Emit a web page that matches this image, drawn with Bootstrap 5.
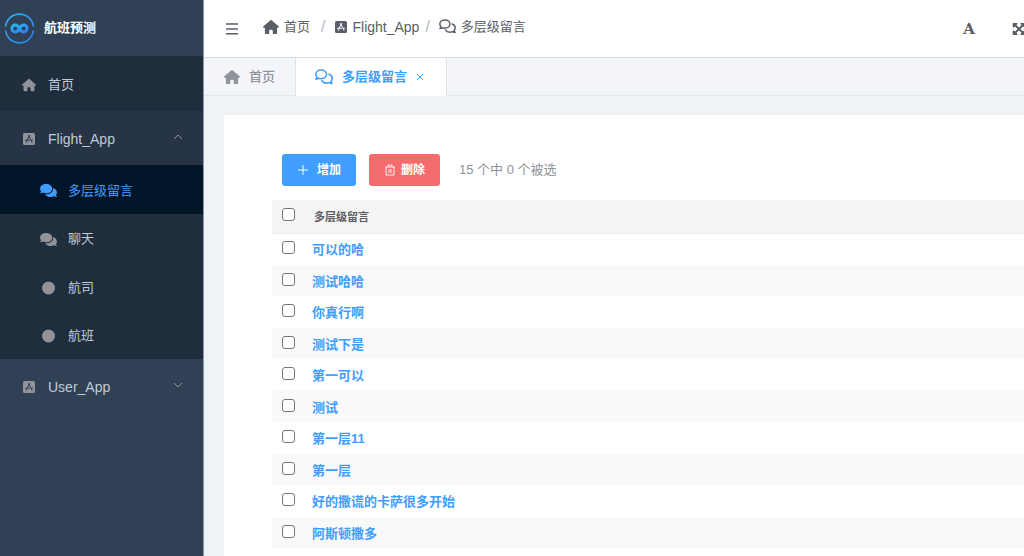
<!DOCTYPE html>
<html lang="zh-CN">
<head>
<meta charset="utf-8">
<meta name="viewport" content="width=device-width, initial-scale=1">
<title>航班预测</title>
<link rel="stylesheet" href="https://cdn.jsdelivr.net/npm/bootstrap@5.3.0/dist/css/bootstrap.min.css">
<style>
  body { font: 13px/20px "Liberation Sans", "Noto Sans CJK SC", sans-serif; background: #eff3f6; color: #5a5e66; }
  a { color: inherit; text-decoration: none; }
  svg { display: block; flex: none; }
  .latin { font-size: 14px; }

  .side { width: 204px; flex: none; background: #304156; border-right: 1px solid #8c97a5; color: #bfcbd9; --cut: #304156; }
  .brand { height: 56px; padding-left: 4px; gap: 9px; color: #fff; font-weight: 700; }
  .side-link { height: 54px; padding: 2px 20px 0 22px; gap: 12px; }
  .side-link svg, .sub-link svg { color: #909399; }
  .side-home { height: 55px; background: #1f2d3d; }
  .side-open { background: #263445; --cut: #263445; }
  .sub-menu { background: #1f2d3d; }
  .sub-link { height: 48px; padding: 2px 0 0 40px; gap: 11px; }
  .sub-link:nth-child(odd) { height: 49px; }
  .sub-link.current, .sub-link.current svg { background: #001528; color: #409eff; }

  .topbar { height: 58px; padding-left: 22px; border-bottom: 1px solid #d8dce5; background: #fff; overflow: hidden; --cut: #fff; }
  .plain { background: none; border: 0; padding: 0; color: #5a5e66; }
  .crumbs { margin: 0 0 4px 25px; }
  .crumbs li { display: flex; align-items: center; gap: 5px; }
  .crumbs .crumb-sep { color: #b4bac6; font-size: 16px; padding: 0 5px 0 6px; }
  .crumbs .crumb-sep.wide { padding: 0 10px 0 11px; }
  .tools { gap: 37px; margin-right: -2px; }
  .letter { font: 700 15px/20px "DejaVu Serif", serif; }

  .tabs { height: 38px; background: #f4f5fa; border-bottom: 1px solid #e4e7ed; }
  .tab-link { height: 38px; padding: 0 20px; gap: 9px; border-right: 1px solid #dfe3ea; color: #909399; font-weight: 500; }
  .tab-link.current { background: #fff; color: #409eff; padding: 0 22px 0 19px; font-weight: 700; }

  .panel { margin: 19px 0 0 20px; padding: 39px 0 8px 48px; background: #fff; }
  .actions { padding-left: 10px; gap: 13px; margin-bottom: 14px; }
  .act { height: 32px; border: 0; border-radius: 3px; color: #fff; font-size: 12px; font-weight: 700; padding: 0 15px; }
  .act-add { background: #409eff; gap: 8px; }
  .act-del { background: #f56c6c; gap: 5px; }
  .tally { color: #909399; margin-left: 6px; }

  .records { --bs-table-bg: transparent; margin: 0; }
  .records > :not(caption) > * > * { padding: 2px 0 0; border: 0; height: 31px; box-shadow: none; vertical-align: middle; }
  .records > tbody > tr:nth-child(odd) > * { height: 32px; }
  .records > tbody > tr:nth-child(even) { background: #f9f9f9; }
  .records > thead > tr { background: #f4f4f4; }
  .records > thead > tr > * { height: 33px; border-bottom: 1px solid #ebebeb; font-size: 11px; color: #5a5e66; }
  .records > :not(caption) > tr > .pick { width: 40px; padding: 0 0 0 10px; }
  .records > thead > tr > th + th { padding-left: 2px; }
  .records input { display: block; appearance: none; width: 13px; height: 13px; margin: 0 0 3px; border: 1px solid #767676; border-radius: 3px; background: #fff; }
  .records input:checked { background: #409eff; }
  .records a { color: #409eff; font-weight: 700; }
</style>
</head>
<body>
<svg width="0" height="0" class="position-absolute" aria-hidden="true">
  <symbol id="home" viewBox="0 0 576 512"><path fill="currentColor" d="M575.8 255.5c0 18-15 32.1-32 32.1h-32l.7 160.2c0 2.7-.2 5.4-.5 8.1V472c0 22.1-17.9 40-40 40H392c-22.1 0-40-17.9-40-40V384c0-17.7-14.3-32-32-32h-64c-17.7 0-32 14.3-32 32v88c0 22.1-17.9 40-40 40h-80c-22.1 0-40-17.9-40-40V287.6H32c-18 0-32-14-32-32.1c0-9 3-17 10-24L266.4 8c7-7 15-8 22-8s15 2 21 7L564.8 231.5c8 7 12 15 11 24z"/></symbol>
  <symbol id="app" viewBox="0 0 24 24"><rect width="24" height="24" rx="3" fill="currentColor"/><path d="M10.500 5l5 8.500M13.500 5l-5.500 9.500M5 14.500h8M16.500 14.500h2.500M7.500 17l-1 2M16.500 16l1.500 2.500" fill="none" stroke="var(--cut)" stroke-width="2" stroke-linecap="round"/></symbol>
  <symbol id="chat" viewBox="0 0 576 512"><path fill="currentColor" d="M416 192c0-88.400-93.100-160-208-160S0 103.600 0 192c0 34.300 14.100 65.900 38 92-13.400 30.200-35.500 54.200-35.800 54.500-2.200 2.300-2.800 5.700-1.500 8.700S4.800 352 8 352c36.600 0 66.900-12.300 88.700-25 32.200 15.700 70.300 25 111.300 25 114.900 0 208-71.600 208-160zm122 220c23.900-26 38-57.700 38-92 0-66.900-53.500-124.200-129.300-148.100.9 6.600 1.300 13.300 1.300 20.100 0 105.900-107.700 192-240 192-10.800 0-21.300-.8-31.700-1.900C207.800 439.600 281.800 480 368 480c41 0 79.100-9.200 111.300-25 21.800 12.700 52.100 25 88.700 25 3.200 0 6.100-1.900 7.300-4.800 1.300-2.900.7-6.300-1.500-8.700-.3-.2-22.400-24.200-35.800-54.500z"/></symbol>
  <symbol id="chat-line" viewBox="0 0 576 512"><path fill="none" stroke="currentColor" stroke-width="50" stroke-linejoin="round" stroke-linecap="round" d="M370 170c0-77-73-139-172-139S26 93 26 170c0 34 15 64 38 89-8 28-20 48-34 64 32 0 56-10 76-26 29 12 57 12 92 12 99 0 172-62 172-139zM449 170c62 22 102 76 102 136 0 34-15 64-38 89 8 28 20 48 34 64-32 0-56-10-76-26-31 12-65 18-100 18-68 0-127-32-153-78"/></symbol>
  <symbol id="expand" viewBox="0 32 448 448"><path fill="currentColor" stroke="currentColor" stroke-width="26" d="M448 344v112a24 24 0 0 1-24 24H312c-21.400 0-32.100-25.900-17-41l36.200-36.200L224 295.600 116.800 402.900 153 439c15.100 15.100 4.400 41-17 41H24a24 24 0 0 1-24-24V344c0-21.400 25.900-32.100 41-17l36.200 36.200L184.500 256 77.200 148.700 41 185c-15.100 15.100-41 4.400-41-17V56a24 24 0 0 1 24-24h112c21.400 0 32.100 25.900 17 41l-36.200 36.200L224 216.400l107.200-107.300L295 73c-15.100-15.100-4.400-41 17-41h112a24 24 0 0 1 24 24v112c0 21.400-25.900 32.100-41 17l-36.200-36.200L263.500 256l107.300 107.300L407 327.100c15.100-15.200 41-4.500 41 16.900z"/></symbol>
  <symbol id="dot" viewBox="0 0 16 16"><circle cx="8" cy="8" r="6.500" fill="currentColor"/></symbol>
</svg>

<div class="d-flex min-vh-100">
  <aside class="side">
    <a href="#" class="brand d-flex align-items-center">
      <svg width="31" height="31" viewBox="0 0 31 31" fill="none">
        <defs><linearGradient id="sky" x1="0" y1="0" x2="1" y2="1"><stop stop-color="#2cb5f0"/><stop offset="1" stop-color="#2f7df0"/></linearGradient></defs>
        <path d="M1.600 13.500a14 14 0 0 1 27.800 0M1.600 17.500a14 14 0 0 0 27.800 0" stroke="url(#sky)" stroke-width="1.600"/>
        <path d="M15.500 15.500c-1.400-2.500-2.600-3.400-4.200-3.400a3.400 3.400 0 0 0 0 6.800c1.600 0 2.800-.9 4.200-3.400s2.600-3.400 4.200-3.400a3.400 3.400 0 0 1 0 6.800c-1.600 0-2.800-.9-4.200-3.400z" stroke="url(#sky)" stroke-width="3"/>
      </svg>
      <span>航班预测</span>
    </a>
    <nav>
      <a href="#" class="side-link side-home d-flex align-items-center"><svg width="14" height="14"><use href="#home"/></svg>首页</a>
      <a href="#" class="side-link side-open latin d-flex align-items-center"><svg width="14" height="12"><use href="#app"/></svg>Flight_App
        <svg class="ms-auto mb-1" width="10" height="6" viewBox="0 0 10 6" fill="none" stroke="currentColor"><path d="M1 5l4-4 4 4"/></svg></a>
      <div class="sub-menu">
        <a href="#" class="sub-link current d-flex align-items-center"><svg width="17" height="15"><use href="#chat"/></svg>多层级留言</a>
        <a href="#" class="sub-link d-flex align-items-center"><svg width="17" height="15"><use href="#chat"/></svg>聊天</a>
        <a href="#" class="sub-link d-flex align-items-center"><svg width="17" height="16"><use href="#dot"/></svg>航司</a>
        <a href="#" class="sub-link d-flex align-items-center"><svg width="17" height="16"><use href="#dot"/></svg>航班</a>
      </div>
      <a href="#" class="side-link latin d-flex align-items-center"><svg width="14" height="12"><use href="#app"/></svg>User_App
        <svg class="ms-auto mb-1" width="10" height="6" viewBox="0 0 10 6" fill="none" stroke="currentColor"><path d="M1 1l4 4 4-4"/></svg></a>
    </nav>
  </aside>

  <main class="flex-grow-1 d-flex flex-column overflow-hidden">
    <header class="topbar d-flex align-items-center">
      <button type="button" class="plain" aria-label="菜单"><svg width="12" height="12" viewBox="0 0 12 12" stroke="currentColor" stroke-width="1.600"><path d="M0 1h12M0 6h12M0 10.800h12"/></svg></button>
      <ol class="crumbs list-unstyled d-flex align-items-center">
        <li><svg width="16" height="14"><use href="#home"/></svg><a href="#">首页</a></li>
        <li class="crumb-sep wide" aria-hidden="true">/</li>
        <li><svg width="12" height="12"><use href="#app"/></svg><a href="#" class="latin">Flight_App</a></li>
        <li class="crumb-sep" aria-hidden="true">/</li>
        <li class="ps-1"><svg width="17" height="15"><use href="#chat-line"/></svg><a href="#">多层级留言</a></li>
      </ol>
      <div class="tools d-flex align-items-center ms-auto">
        <button type="button" class="plain letter" aria-label="字体">A</button>
        <button type="button" class="plain" aria-label="全屏"><svg width="14" height="12" preserveAspectRatio="none"><use href="#expand"/></svg></button>
      </div>
    </header>
    <nav class="tabs d-flex">
      <a href="#" class="tab-link d-flex align-items-center"><svg width="16" height="14"><use href="#home"/></svg>首页</a>
      <a href="#" class="tab-link current d-flex align-items-center"><svg width="18" height="16"><use href="#chat-line"/></svg>多层级留言
        <svg class="ms-auto" width="8" height="8" viewBox="0 0 8 8" stroke="currentColor"><path d="M1 1l6 6M7 1L1 7"/></svg></a>
    </nav>

    <section class="panel flex-grow-1">
      <div class="actions d-flex align-items-center">
        <button type="button" class="act act-add d-flex align-items-center"><svg width="12" height="10" viewBox="0 0 12 10" stroke="currentColor"><path d="M1 5h10M6 0v10"/></svg>增加</button>
        <button type="button" class="act act-del d-flex align-items-center"><svg width="12" height="12" viewBox="0 0 12 12" fill="none" stroke="currentColor" stroke-width=".9"><path d="M1 3h10M4 3V1h4v2M2 3v8h8V3M5 5v4M7 5v4"/></svg>删除</button>
        <span class="tally">15 个中 0 个被选</span>
      </div>
      <table class="table records">
        <thead><tr><th class="pick"><input type="checkbox" aria-label="全选"></th><th>多层级留言</th></tr></thead>
        <tbody>
          <tr><td class="pick"><input type="checkbox" aria-label="可以的哈"></td><td><a href="#">可以的哈</a></td></tr>
          <tr><td class="pick"><input type="checkbox" aria-label="测试哈哈"></td><td><a href="#">测试哈哈</a></td></tr>
          <tr><td class="pick"><input type="checkbox" aria-label="你真行啊"></td><td><a href="#">你真行啊</a></td></tr>
          <tr><td class="pick"><input type="checkbox" aria-label="测试下是"></td><td><a href="#">测试下是</a></td></tr>
          <tr><td class="pick"><input type="checkbox" aria-label="第一可以"></td><td><a href="#">第一可以</a></td></tr>
          <tr><td class="pick"><input type="checkbox" aria-label="测试"></td><td><a href="#">测试</a></td></tr>
          <tr><td class="pick"><input type="checkbox" aria-label="第一层11"></td><td><a href="#">第一层11</a></td></tr>
          <tr><td class="pick"><input type="checkbox" aria-label="第一层"></td><td><a href="#">第一层</a></td></tr>
          <tr><td class="pick"><input type="checkbox" aria-label="好的撒谎的卡萨很多开始"></td><td><a href="#">好的撒谎的卡萨很多开始</a></td></tr>
          <tr><td class="pick"><input type="checkbox" aria-label="阿斯顿撒多"></td><td><a href="#">阿斯顿撒多</a></td></tr>
        </tbody>
      </table>
    </section>
  </main>
</div>
<script src="https://cdn.jsdelivr.net/npm/bootstrap@5.3.0/dist/js/bootstrap.bundle.min.js"></script>
</body>
</html>
